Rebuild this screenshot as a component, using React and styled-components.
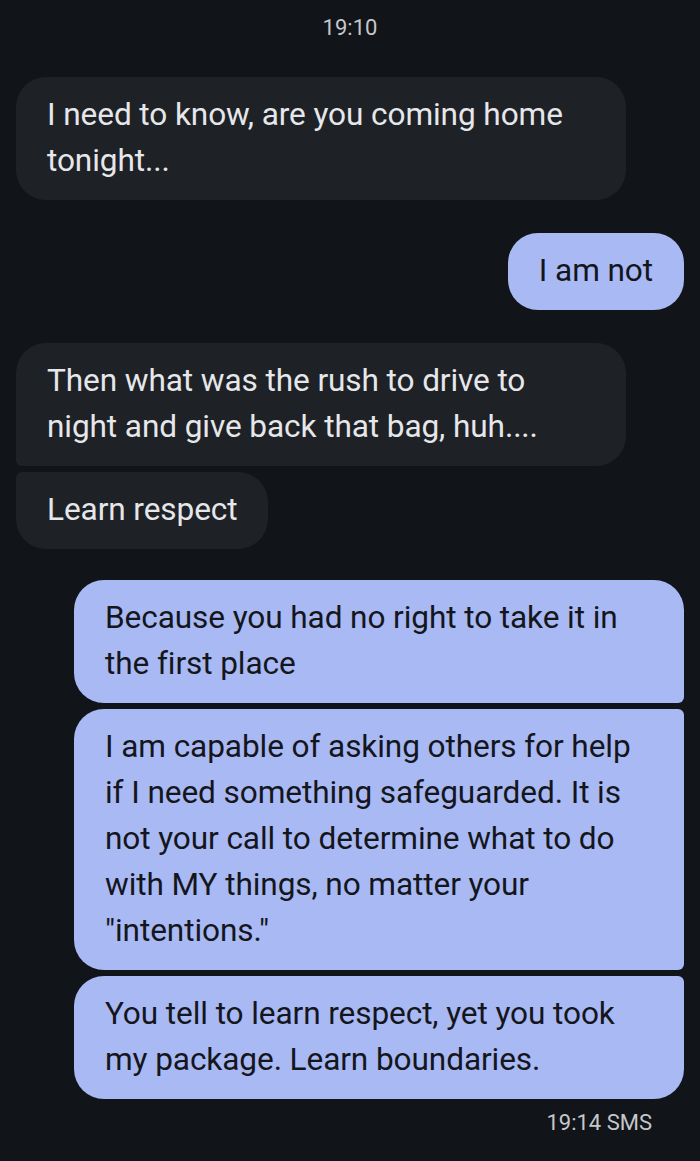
import React from 'react';
import styled, { createGlobalStyle } from 'styled-components';

const GlobalStyle = createGlobalStyle`
  html, body {
    margin: 0;
    padding: 0;
    background: #111418;
  }
  body {
    font-family: Roboto, "Noto Sans", sans-serif;
    -webkit-font-smoothing: antialiased;
  }
`;

const Thread = styled.div`
  display: flex;
  flex-direction: column;
  min-height: 1161px;
  padding: 14px 16px 0 16px;
  box-sizing: border-box;
  background: #111418;
`;

const Stamp = styled.div`
  font-size: 22px;
  line-height: 28px;
  color: #c5c7cc;
  text-align: ${p => (p.right ? 'right' : 'center')};
  padding-right: ${p => (p.right ? '32px' : '0')};
  margin-top: ${p => p.top || 0}px;
`;

const Row = styled.div`
  display: flex;
  justify-content: ${p => (p.mine ? 'flex-end' : 'flex-start')};
  margin-top: ${p => p.gap}px;
`;

const BIG = 30;
const SMALL = 6;

const Bubble = styled.div`
  max-width: 610px;
  box-sizing: border-box;
  padding: 15px 31px 16px 31px;
  font-size: 31.6px;
  line-height: 46px;
  letter-spacing: -0.1px;
  background: ${p => (p.mine ? '#a9b9f4' : '#1e2125')};
  color: ${p => (p.mine ? '#14161c' : '#e6e7ea')};
  border-radius: ${p => p.radius};
`;

const corners = (mine, first, last) => {
  const tl = !mine && !first ? SMALL : BIG;
  const bl = !mine && !last ? SMALL : BIG;
  const tr = mine && !first ? SMALL : BIG;
  const br = mine && !last ? SMALL : BIG;
  return `${tl}px ${tr}px ${br}px ${bl}px`;
};

const groups = [
  { mine: false, gap: 35, items: ['I need to know, are you coming home tonight...'] },
  { mine: true, gap: 33, items: ['I am not'] },
  {
    mine: false,
    gap: 33,
    items: ['Then what was the rush to drive to night and give back that bag, huh....', 'Learn respect'],
  },
  {
    mine: true,
    gap: 31,
    items: [
      'Because you had no right to take it in the first place',
      'I am capable of asking others for help if I need something safeguarded. It is not your call to determine what to do with MY things, no matter your "intentions."',
      'You tell to learn respect, yet you took my package. Learn boundaries.',
    ],
  },
];

export default function App() {
  return (
    <>
      <GlobalStyle />
      <Thread>
        <Stamp>19:10</Stamp>
        {groups.map((g, gi) =>
          g.items.map((text, i) => (
            <Row key={`${gi}-${i}`} mine={g.mine} gap={i === 0 ? g.gap : 6}>
              <Bubble mine={g.mine} radius={corners(g.mine, i === 0, i === g.items.length - 1)}>
                {text}
              </Bubble>
            </Row>
          ))
        )}
        <Stamp right top={10}>19:14 SMS</Stamp>
      </Thread>
    </>
  );
}
